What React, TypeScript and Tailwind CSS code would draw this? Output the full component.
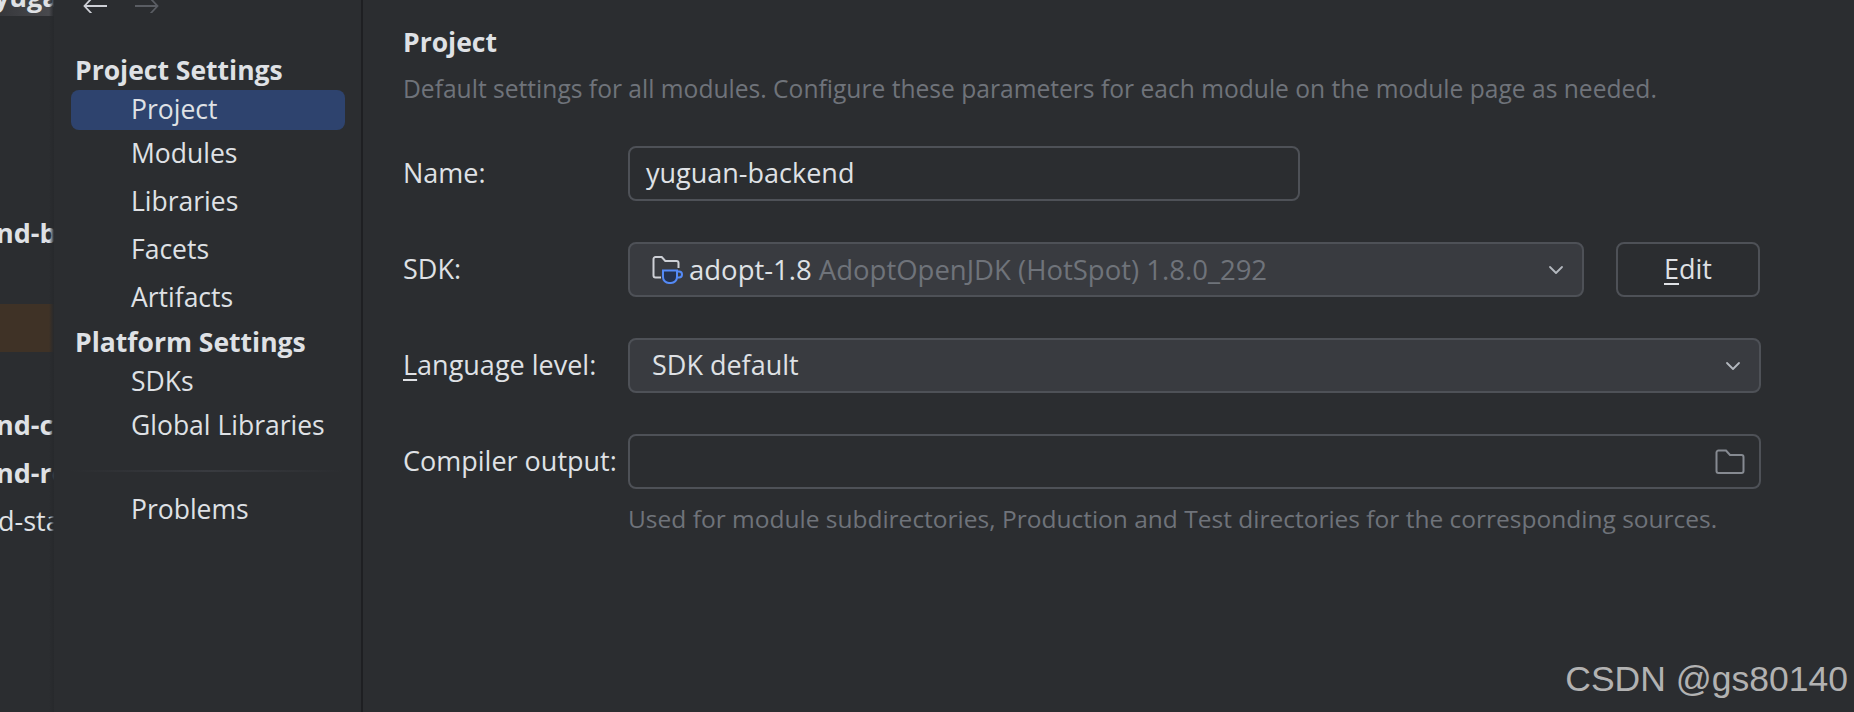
import { ChevronDown } from 'lucide-react';

const FONT = "font-['Open_Sans','Noto_Sans',sans-serif]";

function ClippedRow({ text, className }: { text: string; className: string }) {
  return <div className={`overflow-hidden whitespace-nowrap text-[27px] leading-[48px] text-[#dfe1e5] ${className}`}>{text}</div>;
}

function LeftPanel() {
  return (
    <div className="relative w-[54px] shrink-0 overflow-hidden">
      <div className="h-4 w-full overflow-hidden bg-gradient-to-r from-[#37383c] to-[#4a4b4f]">
        <div className="-ml-[6px] -mt-[27px] whitespace-nowrap text-[27px] font-bold leading-[48px] text-[#dfe1e5]">yuga</div>
      </div>
      <div className="h-[193px]" />
      <ClippedRow text="nd-biz" className="-ml-[4px] font-bold" />
      <div className="mt-[47px] h-[48px] bg-[#3f3226]" />
      <div className="h-[49px]" />
      <ClippedRow text="nd-common" className="-ml-[4px] font-bold" />
      <ClippedRow text="nd-rest" className="-ml-[4px] font-bold" />
      <ClippedRow text="d-starter" className="-ml-[2px]" />
      <div className="absolute inset-y-0 right-0 w-[5px] bg-gradient-to-r from-transparent to-[#27292c]" />
    </div>
  );
}

function NavHeader({ label, className }: { label: string; className: string }) {
  return <div className={`pl-[21px] text-[26.500px] font-bold leading-[32px] text-[#dfe1e5] ${className}`}>{label}</div>;
}

function NavItem({ label, active, className }: { label: string; active?: boolean; className: string }) {
  return (
    <div className={`ml-[17px] mr-[16px] flex h-[40px] items-center rounded-[8px] pl-[60px] text-[26.500px] text-[#dfe1e5] ${active ? 'bg-[#2e436e]' : ''} ${className}`}>
      {label}
    </div>
  );
}

function NavArrow({ dir, className }: { dir: 'left' | 'right'; className: string }) {
  const d = dir === 'left' ? 'M24 6H1.500M8.500 -1.500L1.500 6l7 7.500' : 'M0 6h22.500M15.500 -1.500L22.500 6l-7 7.500';
  return (
    <svg width="24" height="16" viewBox="0 0 24 16" fill="none" className={className}>
      <path d={d} stroke="currentColor" strokeWidth="1.8" />
    </svg>
  );
}

function Sidebar() {
  return (
    <div className="w-[309px] shrink-0 border-r-2 border-[#1e1f22]">
      <div className="flex h-[13px] items-start gap-[28px] overflow-hidden pl-[29px]">
        <NavArrow dir="left" className="text-[#ced0d6]" />
        <NavArrow dir="right" className="text-[#5a5d63]" />
      </div>
      <NavHeader label="Project Settings" className="mt-[41px]" />
      <NavItem label="Project" active className="mt-[4px]" />
      <NavItem label="Modules" className="mt-[4px]" />
      <NavItem label="Libraries" className="mt-[8px]" />
      <NavItem label="Facets" className="mt-[8px]" />
      <NavItem label="Artifacts" className="mt-[8px]" />
      <NavHeader label="Platform Settings" className="mt-[8px]" />
      <NavItem label="SDKs" className="mt-[4px]" />
      <NavItem label="Global Libraries" className="mt-[4px]" />
      <div className="mx-[17px] mt-[24px] h-[2px] bg-gradient-to-r from-transparent via-[#393b40] to-transparent" />
      <NavItem label="Problems" className="mt-[18px]" />
    </div>
  );
}

function JdkIcon() {
  return (
    <svg width="32" height="32" viewBox="0 0 32 32" fill="none" className="shrink-0">
      <path d="M9 23.500H3.500a2 2 0 0 1-2-2V5a2 2 0 0 1 2-2h6.200l3.600 4h11.200a2 2 0 0 1 2 2v5" stroke="#ced0d6" strokeWidth="2" />
      <path d="M11 16.500h14v6.500a6 6 0 0 1-6 6h-2a6 6 0 0 1-6-6z" fill="#25324d" stroke="#548af7" strokeWidth="2" />
      <path d="M25 17.500h2a3 3 0 0 1 0 6h-2.500" stroke="#548af7" strokeWidth="2" />
    </svg>
  );
}

function FolderIcon() {
  return (
    <svg width="30" height="26" viewBox="0 0 30 26" fill="none" className="shrink-0">
      <path d="M3.500 1.500h7.500l4 4.500h11.500a2 2 0 0 1 2 2v14a2 2 0 0 1-2 2h-23a2 2 0 0 1-2-2v-18.500a2 2 0 0 1 2-2z" stroke="#868a91" strokeWidth="2" />
    </svg>
  );
}

function FormRow({ label, className, children }: { label: React.ReactNode; className?: string; children: React.ReactNode }) {
  return (
    <div className={`flex h-[55px] items-center ${className ?? ''}`}>
      <div className="w-[225px] shrink-0 whitespace-nowrap text-[27px] text-[#dfe1e5]">{label}</div>
      {children}
    </div>
  );
}

const fieldBase = 'flex h-full items-center rounded-[8px] border-2 border-[#4e5157]';

function Content() {
  return (
    <div className="min-w-0 flex-1 pl-[40px] pr-[93px] pt-[25px]">
      <div className="text-[26.500px] font-bold leading-[34px] text-[#dfe1e5]">Project</div>
      <div className="mt-[14px] whitespace-nowrap text-[24.600px] leading-[32px] text-[#6f737a]">
        Default settings for all modules. Configure these parameters for each module on the module page as needed.
      </div>
      <FormRow label="Name:" className="mt-[41px]">
        <div className={`${fieldBase} w-[672px] pl-[16px] text-[27px] text-[#dfe1e5]`}>yuguan-backend</div>
      </FormRow>
      <FormRow label="SDK:" className="mt-[41px]">
        <div className={`${fieldBase} w-[956px] gap-[5px] bg-[#393b40] pl-[22px] pr-[14px] text-[27.500px]`}>
          <JdkIcon />
          <span className="text-[#dfe1e5]">adopt-1.8</span>
          <span className="ml-[2px] text-[#6f737a]">AdoptOpenJDK (HotSpot) 1.8.0_292</span>
          <ChevronDown size={24} strokeWidth={1.8} className="ml-auto text-[#b4b8bf]" />
        </div>
        <div className={`${fieldBase} ml-[32px] w-[144px] justify-center text-[27px] text-[#dfe1e5]`}>
          <span><span className="underline underline-offset-[4px]">E</span>dit</span>
        </div>
      </FormRow>
      <FormRow label={<><span className="underline underline-offset-[4px]">L</span>anguage level:</>} className="mt-[41px]">
        <div className={`${fieldBase} flex-1 bg-[#393b40] pl-[22px] pr-[14px] text-[27px] text-[#dfe1e5]`}>
          SDK default
          <ChevronDown size={24} strokeWidth={1.8} className="ml-auto text-[#b4b8bf]" />
        </div>
      </FormRow>
      <FormRow label="Compiler output:" className="mt-[41px]">
        <div className={`${fieldBase} flex-1 justify-end pr-[14px]`}>
          <FolderIcon />
        </div>
      </FormRow>
      <div className="mt-[14px] whitespace-nowrap pl-[225px] text-[24.500px] leading-[32px] text-[#6f737a]">
        Used for module subdirectories, Production and Test directories for the corresponding sources.
      </div>
    </div>
  );
}

export default function App() {
  return (
    <div className={`relative flex h-[712px] w-[1854px] overflow-hidden bg-[#2b2d30] ${FONT}`}>
      <LeftPanel />
      <Sidebar />
      <Content />
      <div className="absolute bottom-[13px] right-[6px] font-['Liberation_Sans',sans-serif] text-[35.500px] leading-[40px] text-[#b2b2b2]">
        CSDN @gs80140
      </div>
    </div>
  );
}
